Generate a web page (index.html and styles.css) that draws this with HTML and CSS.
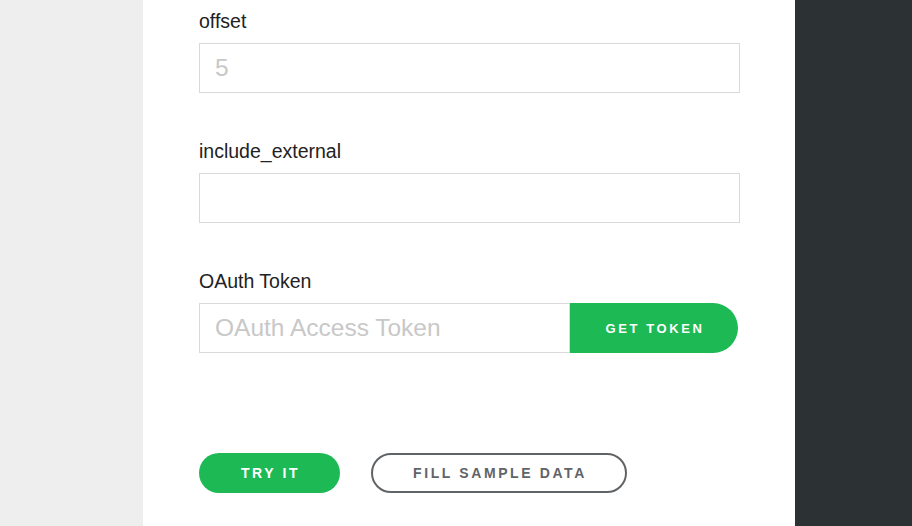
FILE: index.html
```html
<!DOCTYPE html>
<html>
<head>
<meta charset="utf-8">
<link rel="stylesheet" href="styles.css">
</head>
<body>
<div class="page">
  <aside class="left"></aside>
  <main class="content">
    <div class="field">
      <label class="label">offset</label>
      <input class="input" placeholder="5">
    </div>
    <div class="field">
      <label class="label">include_external</label>
      <input class="input">
    </div>
    <div class="field">
      <label class="label">OAuth Token</label>
      <div class="token-row">
        <input class="input token-input" placeholder="OAuth Access Token">
        <button class="get-token">GET TOKEN</button>
      </div>
    </div>
    <div class="actions">
      <button class="btn btn-primary">TRY IT</button>
      <button class="btn btn-outline">FILL SAMPLE DATA</button>
    </div>
  </main>
  <aside class="right"></aside>
</div>
</body>
</html>
```
FILE: styles.css
```css
* { box-sizing: border-box; }
html, body { margin: 0; padding: 0; height: 100%; }
body {
  font-family: "Liberation Sans", Arial, sans-serif;
  color: #181818;
  overflow: hidden;
}
.page {
  display: flex;
  width: 912px;
  height: 526px;
}
.left { width: 143px; background: #eeeeee; flex: none; }
.right { width: 117px; background: #2c3134; flex: none; }
.content {
  flex: 1;
  background: #ffffff;
  padding: 8px 55px 0 56px;
  display: flex;
  flex-direction: column;
}
.field {
  display: flex;
  flex-direction: column;
  margin-bottom: 45px;
}
.label {
  font-size: 19.5px;
  line-height: 26px;
  margin-bottom: 9px;
  color: #222222;
}
.input {
  width: 541px;
  height: 50px;
  border: 1px solid #d9d9d9;
  border-radius: 0;
  padding: 0 15px;
  font-family: "Liberation Sans", Arial, sans-serif;
  font-size: 24.5px;
  color: #181818;
  outline: none;
  background: #fff;
}
.input::placeholder { color: #c8c8c8; }
.token-row { display: flex; }
.token-input { width: 371px; }
.get-token {
  width: 168px;
  height: 50px;
  border: none;
  background: #1db954;
  color: #fff;
  font-family: "Liberation Sans", Arial, sans-serif;
  font-weight: bold;
  font-size: 13px;
  letter-spacing: 2.6px;
  border-radius: 0 25px 25px 0;
  padding: 0 0 0 2px;
}
.actions {
  display: flex;
  gap: 31px;
  margin-top: 55px;
}
.btn {
  height: 40px;
  border-radius: 20px;
  font-family: "Liberation Sans", Arial, sans-serif;
  font-weight: bold;
  font-size: 14px;
  letter-spacing: 2.6px;
  padding: 0 0 0 2px;
}
.btn-primary {
  width: 141px;
  background: #1db954;
  color: #fff;
  border: none;
}
.btn-outline {
  width: 256px;
  background: #fff;
  color: #616467;
  border: 2px solid #616467;
}
```
